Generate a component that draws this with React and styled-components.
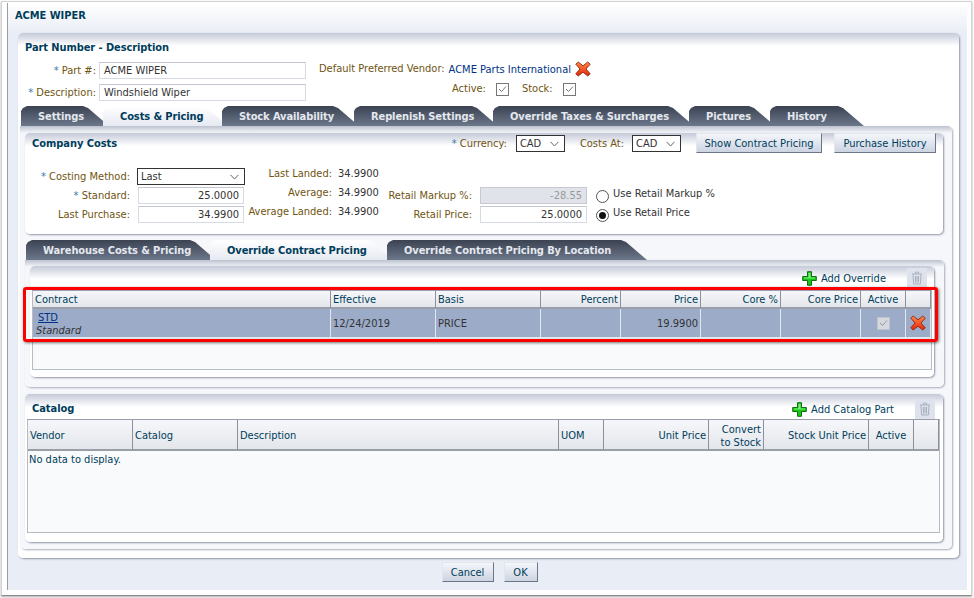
import React from "react";
import styled, { createGlobalStyle } from "styled-components";

const Global = createGlobalStyle`
  html, body { margin: 0; padding: 0; background: #fff; }
  body { font-family: "DejaVu Sans Condensed", "Open Sans", sans-serif; font-size: 11px; color: #333; }
  * { box-sizing: border-box; }
`;

const blue = "#003d5b";
const brown = "#6f5410";

const Page = styled.div`
  position: relative;
  width: 974px;
  height: 598px;
  overflow: hidden;
  background: #fff;
`;
const Frame = styled.div`
  margin: 1px 1px 0 1px;
  width: 971px;
  height: 595px;
  border: 1px solid #d2d2d2;
  border-bottom-color: #8d8d8d;
  box-shadow: 0 1px 2px #aaa;
  padding: 1px 3px 4px 5px;
`;
const Dialog = styled.div`
  width: 960px;
  height: 587px;
  border-left: 1px solid #9a9da3;
  background: linear-gradient(#fff 0, #e9edf5 30px);
  display: flex;
  flex-direction: column;
`;
const DialogTitle = styled.div`
  height: 30px;
  padding: 6px 0 0 7px;
  font-weight: bold;
  line-height: 14px;
  letter-spacing: -0.05px;
  color: ${blue};
`;
const Panel = styled.div`
  margin-left: 10px;
  width: 941px;
  height: 525px;
  border-radius: 5px;
  background: linear-gradient(#c5cad8 0, #fff 13px);
  box-shadow: 1px 1px 2px #8f96a5;
  padding: 7px 0 0 2px;
`;
const Heading = styled.div`
  height: 22px;
  padding-left: 5px;
  font-weight: bold;
  line-height: 16px;
  letter-spacing: -0.08px;
  color: ${blue};
`;
const TopForm = styled.div`
  display: flex;
  height: 39px;
`;
const FieldCol = styled.div`
  display: grid;
  grid-template-columns: 76px 207px;
  grid-auto-rows: 17px;
  row-gap: 5px;
  column-gap: 3px;
  align-items: center;
`;
const Label = styled.label`
  color: ${brown};
  text-align: right;
  white-space: nowrap;
  line-height: 14px;
`;
const Req = styled.span`
  color: #3a7aa8;
`;
const Input = styled.div`
  height: 17px;
  margin: 0 ${(p) => (p.$inset ? 1 : 0)}px;
  border: 1px solid #d6dae3;
  border-top-color: #c2c6cf;
  background: #fff;
  color: #333;
  line-height: 15px;
  padding: 0 4px;
  text-align: ${(p) => (p.$right ? "right" : "left")};
  &[data-disabled="true"] {
    background: #e0e3ea;
    color: #999;
    border-color: #c6c9d0;
  }
`;
const VendorCol = styled.div`
  margin: -1px 0 0 13px;
  width: 300px;
  display: flex;
  flex-direction: column;
  gap: 3px;
`;
const VendorRow = styled.div`
  display: flex;
  align-items: center;
  height: 16px;
  gap: 4px;
`;
const CheckRow = styled.div`
  display: flex;
  align-items: center;
  height: 18px;
  margin-left: 133px;
  gap: 10px;
`;
const Link = styled.a`
  color: #003286;
  text-decoration: ${(p) => (p.$u ? "underline" : "none")};
`;
const Check = styled.span`
  display: inline-flex;
  align-items: center;
  justify-content: center;
  width: 13px;
  height: 13px;
  border: 1px solid #777;
  background: #fff;
  margin-right: 3px;
`;
const TabRow = styled.div`
  display: flex;
  height: 20px;
  margin: ${(p) => p.$m};
`;
const Tab = styled.div`
  width: ${(p) => p.$w}px;
  height: 20px;
  margin-right: ${(p) => p.$mr || 0}px;
  padding-left: 17px;
  line-height: 21px;
  font-weight: bold;
  letter-spacing: -0.1px;
  white-space: nowrap;
  color: ${(p) => (p.$active ? blue : "#e4e8ef")};
  background: ${(p) => (p.$active ? "linear-gradient(#fff, #e6e9f1)" : "linear-gradient(#3b4352, #6c778a)")};
  clip-path: polygon(0 5px, 2px 2px, 6px 0, calc(100% - 26px) 0, calc(100% - 21px) 2px, 100% 100%, 0 100%);
`;
const TabBody = styled.div`
  width: 932px;
  height: 423px;
  border-radius: 0 5px 5px 5px;
  background: linear-gradient(#bcc2cf 0, #f6f7fb 7px);
  box-shadow: 1px 1px 2px #a8adb9;
  padding: 7px 0 0 5px;
`;
const Card = styled.div`
  width: ${(p) => p.$w}px;
  height: ${(p) => p.$h}px;
  margin-top: ${(p) => p.$mt || 0}px;
  border-radius: 5px;
  background: linear-gradient(#c5cad8 0, #fff 13px);
  box-shadow: 1px 1px 2px #8f96a5;
`;
const CostTop = styled.div`
  display: flex;
  align-items: flex-start;
  height: 34px;
  padding: 0 7px;
`;
const CardTitle = styled.div`
  font-weight: bold;
  color: ${blue};
  line-height: 16px;
  letter-spacing: -0.05px;
  padding-top: ${(p) => p.$pt || 0}px;
  margin-right: auto;
`;
const SmallField = styled.div`
  display: flex;
  align-items: center;
  height: 17px;
  margin: 2px 15px 0 0;
  gap: ${(p) => p.$gap}px;
`;
const SelectBox = styled.div`
  display: flex;
  align-items: center;
  justify-content: space-between;
  width: ${(p) => p.$w}px;
  height: 17px;
  border: 1px solid #333;
  padding: 0 5px 0 3px;
  background: #fff;
  color: #333;
`;
const Btn = styled.div`
  height: 20px;
  width: ${(p) => p.$w}px;
  margin-left: ${(p) => p.$ml || 0}px;
  text-align: center;
  line-height: 19px;
  color: ${blue};
  background: linear-gradient(#f4f6fa, #ccd4e2);
  border-right: 1px solid #6b7585;
  border-bottom: 1px solid #6b7585;
  border-top: 1px solid #e3e6ec;
  border-left: 1px solid #e3e6ec;
`;
const ColWrap = styled.div`
  display: flex;
  align-items: flex-start;
`;
const CostCol = styled.div`
  display: grid;
  width: ${(p) => p.$w}px;
  margin: ${(p) => p.$mt || 0}px 0 0 ${(p) => p.$ml || 0}px;
  padding-top: ${(p) => p.$pt || 0}px;
  grid-template-columns: ${(p) => p.$cols};
  grid-auto-rows: 19px;
  column-gap: ${(p) => p.$gap}px;
  align-items: center;
`;
const Value = styled.span`
  color: #333;
`;
const RadioCol = styled.div`
  margin-left: 9px;
  padding-top: 19px;
`;
const RadioRow = styled.div`
  display: flex;
  align-items: flex-start;
  height: 19px;
  gap: 4px;
  line-height: 16px;
  color: #333;
`;
const Radio = styled.span`
  display: inline-flex;
  align-items: center;
  justify-content: center;
  width: 13px;
  height: 13px;
  margin-top: 4px;
  border-radius: 50%;
  border: 1px solid #555;
  background: #fff;
  &::after {
    content: "";
    display: ${(p) => (p.$on ? "block" : "none")};
    width: 7px;
    height: 7px;
    border-radius: 50%;
    background: #111;
  }
`;
const SubBody = styled.div`
  width: 919px;
  height: 127px;
  border-radius: 0 5px 5px 5px;
  background: linear-gradient(#bcc2cf 0, #f6f7fb 7px);
  box-shadow: 1px 1px 2px #a8adb9;
  padding: 6px 0 0 5px;
`;
const Toolbar = styled.div`
  display: flex;
  align-items: center;
  justify-content: flex-end;
  height: ${(p) => p.$h}px;
  padding: ${(p) => p.$pt}px ${(p) => p.$pr}px 0 7px;
`;
const ToolAction = styled.div`
  display: flex;
  align-items: center;
  gap: 4px;
  color: ${blue};
`;
const TrashBox = styled.div`
  display: flex;
  align-items: center;
  justify-content: center;
  width: 20px;
  height: 20px;
  margin-left: ${(p) => p.$ml}px;
  background: #dde2ec;
`;
const Table = styled.div`
  margin-left: ${(p) => p.$ml}px;
  width: ${(p) => p.$w}px;
  height: ${(p) => p.$h}px;
  border: 1px solid #b7bbc2;
  border-top-color: #9a9ea6;
  background: #f9fafc;
`;
const Row = styled.div`
  display: grid;
  grid-template-columns: ${(p) => p.$cols};
  height: ${(p) => p.$h}px;
`;
const Th = styled.div`
  display: flex;
  align-items: center;
  justify-content: ${(p) => (p.$right ? "flex-end" : p.$center ? "center" : "flex-start")};
  padding: ${(p) => p.$pt || 0}px 2px 0;
  text-align: ${(p) => (p.$right ? "right" : "left")};
  line-height: 13px;
  color: ${blue};
  background: linear-gradient(#f6f7fa, #e3e6eb);
  border-right: 1px solid #8b9099;
  border-bottom: 2px solid #9a9ea6;
`;
const Td = styled.div`
  display: flex;
  align-items: center;
  justify-content: ${(p) => (p.$right ? "flex-end" : p.$center ? "center" : "flex-start")};
  padding: 0 2px;
  color: #333;
  background: #9cabc8;
  border-right: 1px solid #e2e6ee;
  border-bottom: 2px solid #e2e6ee;
`;
const ContractCell = styled.div`
  display: flex;
  flex-direction: column;
  line-height: 13px;
  padding: 2px 0 0 3px;
`;
const Em = styled.i`
  margin-left: -2px;
  color: #333;
`;
const NoData = styled.div`
  padding: 2px 1px;
  color: ${blue};
  line-height: 14px;
`;
const RowCheck = styled.span`
  display: inline-flex;
  align-items: center;
  justify-content: center;
  width: 13px;
  height: 13px;
  background: #d5d8de;
  border: 1px solid #bfc3ca;
`;
const Highlight = styled.div`
  position: absolute;
  left: 23px;
  top: 287px;
  width: 915px;
  height: 55px;
  border: 3px solid #f00;
  border-radius: 3px;
  box-shadow: 1px 1px 3px rgba(0, 0, 0, 0.55);
  pointer-events: none;
`;
const Footer = styled.div`
  display: flex;
  justify-content: center;
  gap: 10px;
  padding: 4px 0 0 4px;
`;

const XIcon = () => (
  <svg width="16" height="16" viewBox="0 0 16 16">
    <defs>
      <linearGradient id="xg" x1="0" y1="0" x2="0" y2="1">
        <stop offset="0" stopColor="#ff8a4a" />
        <stop offset="1" stopColor="#e8230a" />
      </linearGradient>
    </defs>
    <path
      d="M3.2 1 L8 4.8 L12.8 1 L15.2 3.2 L11 8 L15.2 12.8 L12.8 15 L8 11.2 L3.2 15 L.8 12.8 L5 8 L.8 3.2 Z"
      fill="url(#xg)"
      stroke="#8a2a12"
      strokeWidth="0.9"
      strokeLinejoin="round"
    />
  </svg>
);
const PlusIcon = () => (
  <svg width="15" height="15" viewBox="0 0 15 15">
    <path
      d="M5.5 .7 H9.5 V5.5 H14.3 V9.5 H9.5 V14.3 H5.5 V9.5 H.7 V5.5 H5.5 Z"
      fill="#14c814"
      stroke="#136b13"
      strokeWidth="1"
      strokeLinejoin="round"
    />
    <path d="M6.5 2 H8.5 V6.5 H13 V7.5 H2 V6.5 H6.5 Z" fill="#7df07d" />
  </svg>
);
const TrashIcon = () => (
  <svg width="12" height="14" viewBox="0 0 12 14" fill="none" stroke="#a9b0bd" strokeWidth="1">
    <path d="M1 3 H11 M4.5 3 V1.2 H7.5 V3" />
    <path d="M2 3.5 L2.6 13 H9.4 L10 3.5 M4.5 5 V11.5 M6 5 V11.5 M7.5 5 V11.5" />
  </svg>
);
const TickIcon = ({ color = "#777" }) => (
  <svg width="9" height="8" viewBox="0 0 9 8" fill="none" stroke={color} strokeWidth="1">
    <path d="M1 4 L3.5 6.5 L8 1.5" />
  </svg>
);
const Chevron = () => (
  <svg width="9" height="6" viewBox="0 0 9 6" fill="none" stroke="#666" strokeWidth="1">
    <path d="M.5 .8 L4.5 5 L8.5 .8" />
  </svg>
);

const overrideCols = "298px 105px 105px 80px 80px 80px 80px 45px 1fr";
const catalogCols = "105px 105px 321px 45px 105px 55px 105px 45px 1fr";

export default function App() {
  return (
    <Page>
      <Global />
      <Frame>
        <Dialog>
          <DialogTitle>ACME WIPER</DialogTitle>
          <Panel>
            <Heading>Part Number - Description</Heading>
            <TopForm>
              <FieldCol>
                <Label><Req>* </Req>Part #:</Label>
                <Input>ACME WIPER</Input>
                <Label><Req>* </Req>Description:</Label>
                <Input>Windshield Wiper</Input>
              </FieldCol>
              <VendorCol>
                <VendorRow>
                  <Label>Default Preferred Vendor:</Label>
                  <Link>ACME Parts International</Link>
                  <XIcon />
                </VendorRow>
                <CheckRow>
                  <Label>Active:</Label>
                  <Check><TickIcon /></Check>
                  <Label>Stock:</Label>
                  <Check><TickIcon /></Check>
                </CheckRow>
              </VendorCol>
            </TopForm>
            <TabRow $m="5px 0 0 1px">
              <Tab $w={88} $mr={-6}>Settings</Tab>
              <Tab $w={125} $mr={-6} $active>Costs &amp; Pricing</Tab>
              <Tab $w={137} $mr={-5}>Stock Availability</Tab>
              <Tab $w={144} $mr={-5}>Replenish Settings</Tab>
              <Tab $w={201} $mr={-5}>Override Taxes &amp; Surcharges</Tab>
              <Tab $w={86} $mr={-5}>Pictures</Tab>
              <Tab $w={94}>History</Tab>
            </TabRow>
            <TabBody>
              <Card $w={918} $h={101}>
                <CostTop>
                  <CardTitle $pt={3}>Company Costs</CardTitle>
                  <SmallField $gap={9}>
                    <Label><Req>* </Req>Currency:</Label>
                    <SelectBox $w={49}>CAD<Chevron /></SelectBox>
                  </SmallField>
                  <SmallField $gap={8}>
                    <Label>Costs At:</Label>
                    <SelectBox $w={49}>CAD<Chevron /></SelectBox>
                  </SmallField>
                  <Btn $w={126}>Show Contract Pricing</Btn>
                  <Btn $w={102} $ml={12}>Purchase History</Btn>
                </CostTop>
                <ColWrap>
                  <CostCol $w={220} $cols="105px 108px" $gap={7}>
                    <Label><Req>* </Req>Costing Method:</Label>
                    <SelectBox $w={108}>Last<Chevron /></SelectBox>
                    <Label><Req>* </Req>Standard:</Label>
                    <Input $right $inset>25.0000</Input>
                    <Label>Last Purchase:</Label>
                    <Input $right $inset>34.9900</Input>
                  </CostCol>
                  <CostCol $w={135} $cols="88px 47px" $gap={6} $ml={-1} $mt={-3}>
                    <Label>Last Landed:</Label>
                    <Value>34.9900</Value>
                    <Label>Average:</Label>
                    <Value>34.9900</Value>
                    <Label>Average Landed:</Label>
                    <Value>34.9900</Value>
                  </CostCol>
                  <CostCol $w={222} $cols="107px 107px" $gap={8} $ml={-14} $pt={19}>
                    <Label>Retail Markup %:</Label>
                    <Input $right data-disabled="true">-28.55</Input>
                    <Label>Retail Price:</Label>
                    <Input $right>25.0000</Input>
                  </CostCol>
                  <RadioCol>
                    <RadioRow><Radio />Use Retail Markup %</RadioRow>
                    <RadioRow><Radio $on />Use Retail Price</RadioRow>
                  </RadioCol>
                </ColWrap>
              </Card>
              <TabRow $m="6px 0 0 1px">
                <Tab $w={190} $mr={-6}>Warehouse Costs &amp; Pricing</Tab>
                <Tab $w={183} $mr={-6} $active>Override Contract Pricing</Tab>
                <Tab $w={260}>Override Contract Pricing By Location</Tab>
              </TabRow>
              <SubBody>
                <Card $w={904} $h={111}>
                  <Toolbar $h={24} $pt={0} $pr={7}>
                    <ToolAction><PlusIcon />Add Override</ToolAction>
                    <TrashBox $ml={21}><TrashIcon /></TrashBox>
                  </Toolbar>
                  <Table $ml={2} $w={900} $h={80}>
                    <Row $cols={overrideCols} $h={18}>
                      <Th>Contract</Th>
                      <Th>Effective</Th>
                      <Th>Basis</Th>
                      <Th $right>Percent</Th>
                      <Th $right>Price</Th>
                      <Th $right>Core %</Th>
                      <Th $right>Core Price</Th>
                      <Th $center>Active</Th>
                      <Th />
                    </Row>
                    <Row $cols={overrideCols} $h={30}>
                      <Td>
                        <ContractCell>
                          <Link $u>STD</Link>
                          <Em>Standard</Em>
                        </ContractCell>
                      </Td>
                      <Td>12/24/2019</Td>
                      <Td>PRICE</Td>
                      <Td />
                      <Td $right>19.9900</Td>
                      <Td />
                      <Td />
                      <Td $center><RowCheck><TickIcon color="#999" /></RowCheck></Td>
                      <Td $center><XIcon /></Td>
                    </Row>
                  </Table>
                </Card>
              </SubBody>
              <Card $w={918} $h={148} $mt={7}>
                <Toolbar $h={25} $pt={5} $pr={8}>
                  <CardTitle>Catalog</CardTitle>
                  <ToolAction><PlusIcon />Add Catalog Part</ToolAction>
                  <TrashBox $ml={21}><TrashIcon /></TrashBox>
                </Toolbar>
                <Table $ml={2} $w={913} $h={114}>
                  <Row $cols={catalogCols} $h={31}>
                    <Th $pt={2}>Vendor</Th>
                    <Th $pt={2}>Catalog</Th>
                    <Th $pt={2}>Description</Th>
                    <Th $pt={2}>UOM</Th>
                    <Th $pt={2} $right>Unit Price</Th>
                    <Th $pt={2} $right>Convert<br />to Stock</Th>
                    <Th $pt={2} $right>Stock Unit Price</Th>
                    <Th $pt={2} $center>Active</Th>
                    <Th />
                  </Row>
                  <NoData>No data to display.</NoData>
                </Table>
              </Card>
            </TabBody>
          </Panel>
          <Footer>
            <Btn $w={52}>Cancel</Btn>
            <Btn $w={34}>OK</Btn>
          </Footer>
        </Dialog>
      </Frame>
      <Highlight />
    </Page>
  );
}
